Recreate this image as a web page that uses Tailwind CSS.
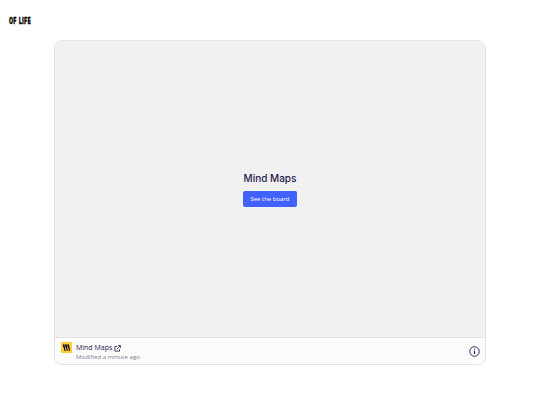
<!DOCTYPE html>
<html>
<head>
<meta charset="utf-8">
<script src="https://cdn.jsdelivr.net/npm/@tailwindcss/browser@4"></script>
</head>
<body class="bg-white w-[540px] h-[405px] overflow-hidden font-['Open_Sans',sans-serif]">
<div class="h-[40px] pt-[16px] pl-[9px]">
  <p class="text-[8px] leading-[10px] font-bold tracking-[0.3px] text-black origin-left scale-x-[0.67] translate-y-[1px] font-['Liberation_Sans_Narrow','DejaVu_Sans_Condensed',sans-serif] [-webkit-text-stroke:0.4px_black]">OF LIFE</p>
</div>
<div class="mx-[54px] h-[325px] rounded-[8px] border border-[#e4e4e7] overflow-hidden flex flex-col">
  <div class="flex-1 bg-[#f1f1f1] flex flex-col items-center justify-center border-b border-[#e4e4e7]">
    <p class="text-[10px] leading-[14px] text-[#1e1a4d] font-medium font-['Inter',sans-serif] mb-[6px]">Mind Maps</p>
    <div class="w-[54px] h-[16px] rounded-[2px] bg-[#4262ff] text-white text-[6px] flex items-center justify-center">See the board</div>
  </div>
  <div class="h-[26px] bg-[#fcfcfc] flex items-center pl-[5px] pr-[5px] shrink-0">
    <div class="w-[11px] h-[11px] ml-[0.5px] rounded-[1px] bg-[#ffd02f] flex items-center justify-center shrink-0 mb-[8px]">
      <svg viewBox="0 0 24 24" class="w-[9px] h-[9px]" fill="none" stroke="#050038" stroke-width="3"><path d="M5 4l3 17M11 4l3 17M17 4l3 17M3 4l3 9M9 4l3 9M15 4l3 9"/></svg>
    </div>
    <div class="ml-[4.5px] flex-1 pt-[3px]">
      <div class="flex items-center gap-[2px]">
        <span class="text-[7px] leading-[10px] text-[#1e1a4d]">Mind Maps</span>
        <svg viewBox="0 0 12 12" class="w-[7px] h-[7px]" fill="none" stroke="#1e1a4d" stroke-width="1.4"><path d="M5 2.5H1.5v8h8V7M5 7l5.5-5.5M7 1h4v4"/></svg>
      </div>
      <p class="text-[6.1px] leading-[8.5px] text-[#7f7d95]">Modified a minute ago</p>
    </div>
    <svg viewBox="0 0 12 12" class="w-[11px] h-[11px] mt-[1px]" fill="none"><circle cx="6" cy="6" r="5.2" stroke="#1e1a4d" stroke-width="1"/><path d="M6 5.2v3.4M6 3v1.2" stroke="#1e1a4d" stroke-width="1.2"/></svg>
  </div>
</div>
</body>
</html>
